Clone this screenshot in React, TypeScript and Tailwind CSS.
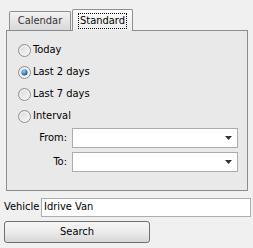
import React from "react";

const options = ["Today", "Last 2 days", "Last 7 days", "Interval"];

function Radio({ checked }: { checked: boolean }) {
    return (
        <svg width="13" height="13" viewBox="0 0 13 13" className="shrink-0">
            <defs>
                <linearGradient id="rg" x1="0" y1="0" x2="1" y2="1">
                    <stop offset="0" stopColor="#d6d6d6" />
                    <stop offset="1" stopColor="#fbfbfb" />
                </linearGradient>
                <radialGradient id="dot" cx="0.4" cy="0.35" r="0.7">
                    <stop offset="0" stopColor="#9fd4f5" />
                    <stop offset="0.6" stopColor="#2f7fc0" />
                    <stop offset="1" stopColor="#1c4f86" />
                </radialGradient>
            </defs>
            <circle cx="6.5" cy="6.5" r="6" fill="url(#rg)" stroke="#8e8f8f" strokeWidth="1" />
            <circle cx="6.5" cy="6.5" r="4.5" fill="none" stroke="#f4f4f4" strokeWidth="1" />
            {checked && <circle cx="6.5" cy="6.5" r="3" fill="url(#dot)" />}
        </svg>
    );
}

function Combo() {
    return (
        <div className="w-[166px] h-[20px] bg-white border border-[#abadb3] flex items-center justify-end pr-[5px]">
            <svg width="7" height="4" viewBox="0 0 7 4">
                <path d="M0 0H7L3.5 4Z" fill="#333" />
            </svg>
        </div>
    );
}

export default function App() {
    return (
        <div
            className="w-[253px] h-[248px] bg-[#f0f0f0] text-[11px] text-black overflow-hidden"
            style={{ fontFamily: '"DejaVu Sans Condensed", "Liberation Sans", Arial, sans-serif' }}
        >
            <div className="ml-[6px] w-[242px]">
                <div className="flex items-end h-[30px] pl-[3px]">
                    <div className="w-[62px] h-[19px] border border-b-0 border-[#8e8f8f] rounded-t-[2px] bg-gradient-to-b from-[#f2f2f2] to-[#d9d9d9] flex items-center justify-center text-[#333]">
                        Calendar
                    </div>
                    <div className="relative z-10 -mb-px ml-px w-[61px] h-[22px] border border-b-0 border-[#8e8f8f] rounded-t-[2px] bg-gradient-to-b from-[#fcfcfc] to-[#ececec] flex items-center justify-center">
                        <span className="outline outline-1 outline-dotted outline-black px-[1px] leading-[14px]">Standard</span>
                    </div>
                </div>
                <div className="h-[161px] border border-[#898c95] bg-[#e9e9e9] pt-[8px]">
                    <div className="pl-[11px] flex flex-col">
                        {options.map((o, i) => (
                            <div key={o} className="h-[22px] flex items-center gap-[2px]">
                                <Radio checked={i === 1} />
                                <span>{o}</span>
                            </div>
                        ))}
                    </div>
                    <div className="mt-[1px] flex flex-col gap-[4px]">
                        <div className="flex items-center">
                            <span className="w-[60px] text-right">From:</span>
                            <span className="ml-[5px]"><Combo /></span>
                        </div>
                        <div className="flex items-center">
                            <span className="w-[60px] text-right">To:</span>
                            <span className="ml-[5px]"><Combo /></span>
                        </div>
                    </div>
                </div>
            </div>
            <div className="flex items-center mt-[7px] pl-[4px]">
                <span className="w-[37px] whitespace-nowrap">Vehicle</span>
                <div className="w-[210px] h-[19px] bg-white border border-[#abadb3] flex items-center pl-[2px]">
                    Idrive Van
                </div>
            </div>
            <button className="ml-[4px] mt-[4px] w-[146px] h-[22px] border border-[#707070] rounded-[3px] bg-gradient-to-b from-[#f6f6f6] via-[#ececec] to-[#d6d6d6] flex items-center justify-center">
                Search
            </button>
            <div className="mt-[5px] border-t border-[#a0a0a0]" />
        </div>
    );
}
